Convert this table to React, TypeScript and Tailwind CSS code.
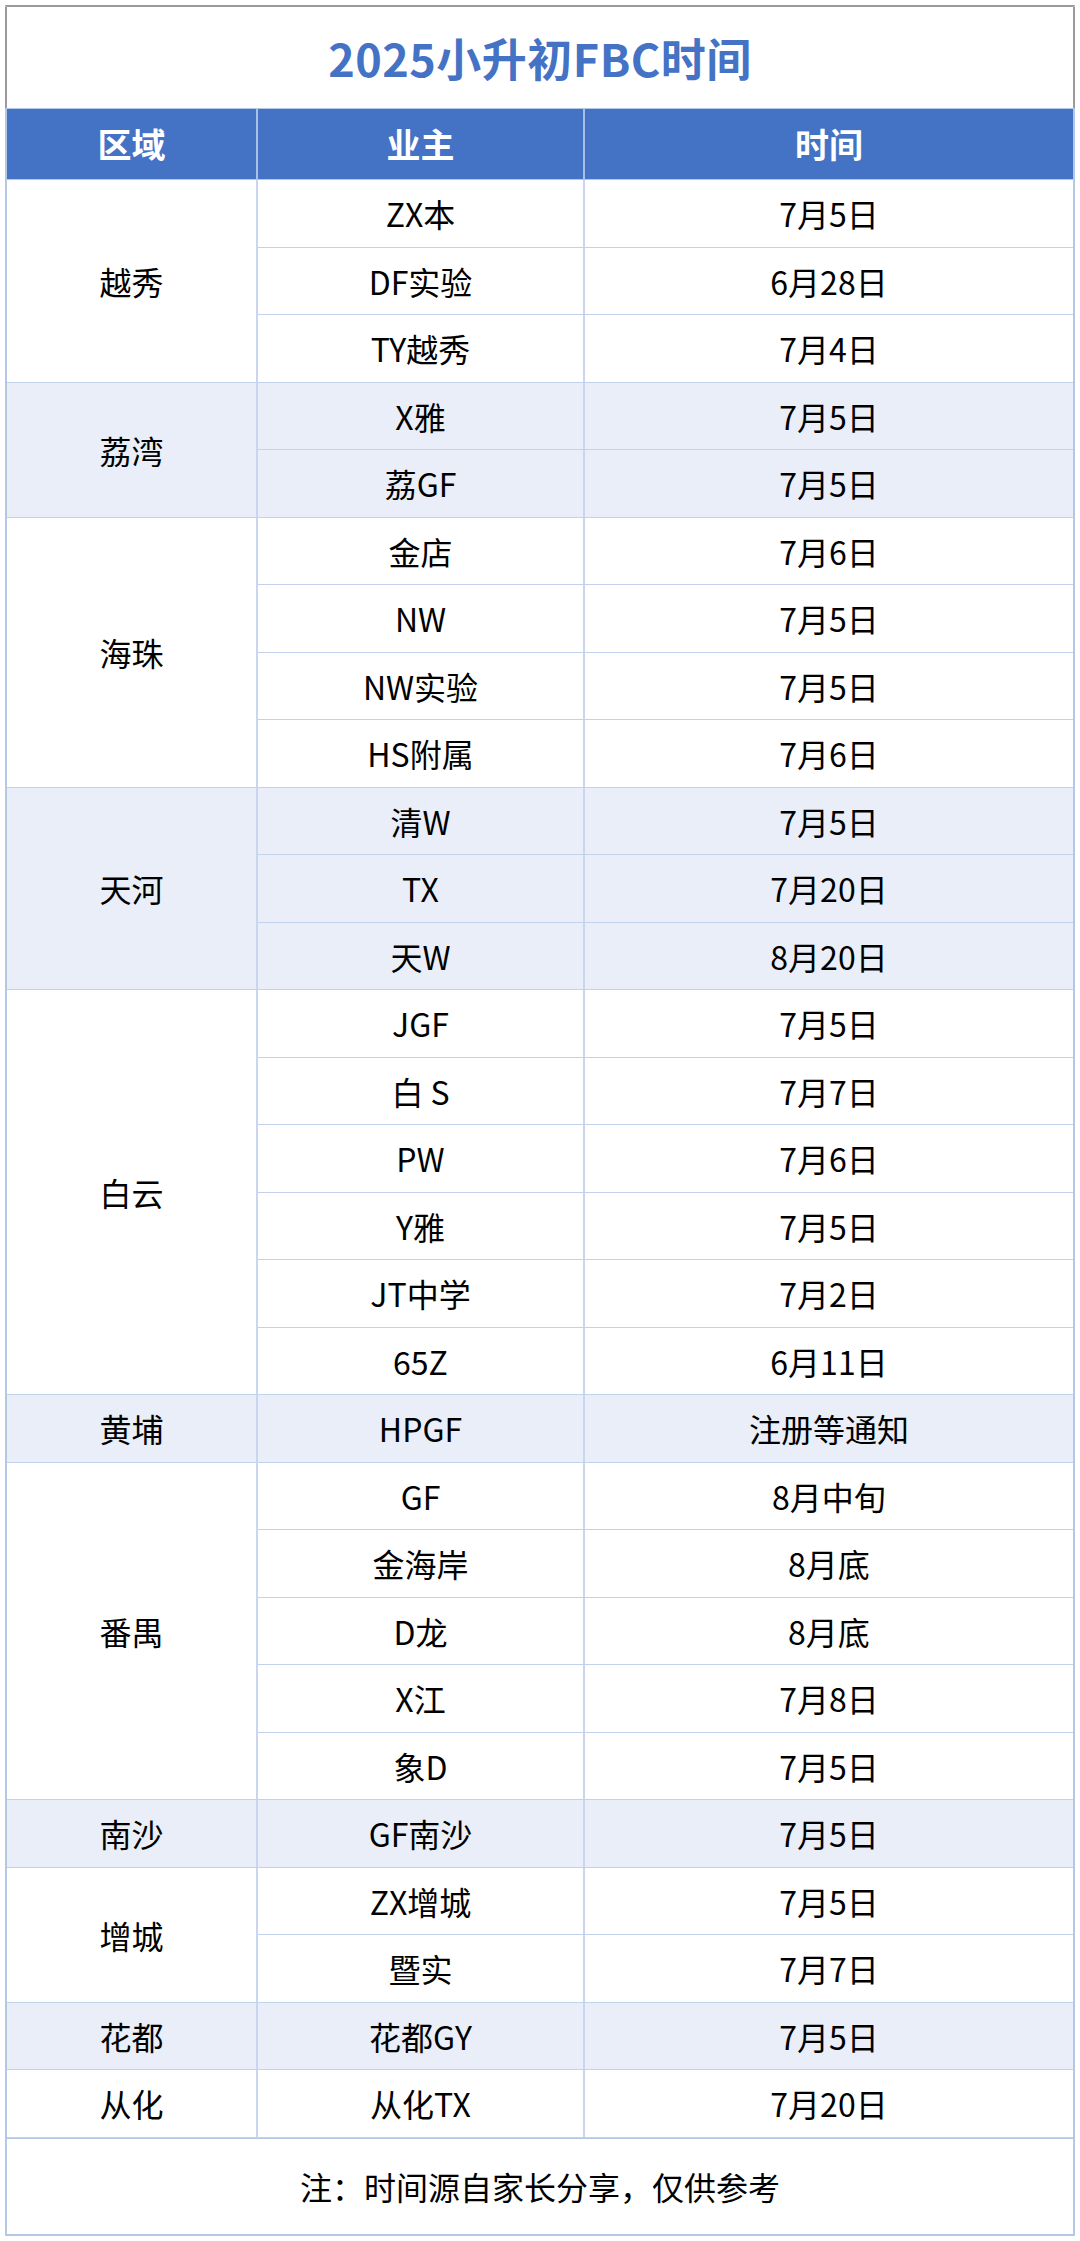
const groups = [
  { region: "越秀", rows: [["ZX本", "7月5日"], ["DF实验", "6月28日"], ["TY越秀", "7月4日"]] },
  { region: "荔湾", rows: [["X雅", "7月5日"], ["荔GF", "7月5日"]] },
  { region: "海珠", rows: [["金店", "7月6日"], ["NW", "7月5日"], ["NW实验", "7月5日"], ["HS附属", "7月6日"]] },
  { region: "天河", rows: [["清W", "7月5日"], ["TX", "7月20日"], ["天W", "8月20日"]] },
  {
    region: "白云",
    rows: [["JGF", "7月5日"], ["白 S", "7月7日"], ["PW", "7月6日"], ["Y雅", "7月5日"], ["JT中学", "7月2日"], ["65Z", "6月11日"]],
  },
  { region: "黄埔", rows: [["HPGF", "注册等通知"]] },
  {
    region: "番禺",
    rows: [["GF", "8月中旬"], ["金海岸", "8月底"], ["D龙", "8月底"], ["X江", "7月8日"], ["象D", "7月5日"]],
  },
  { region: "南沙", rows: [["GF南沙", "7月5日"]] },
  { region: "增城", rows: [["ZX增城", "7月5日"], ["暨实", "7月7日"]] },
  { region: "花都", rows: [["花都GY", "7月5日"]] },
  { region: "从化", rows: [["从化TX", "7月20日"]] },
];

export default function App() {
  return (
    <div
      className="w-[1080px] h-[2241px] bg-white p-[5px] text-black"
      style={{ fontFamily: '"Noto Sans CJK SC", "Noto Sans", sans-serif' }}
    >
      <div className="flex flex-col border-2 border-t-[#9a9a9a] border-x-[#b4c7e7] border-b-[#b4c7e7]">
        <div className="h-[101px] flex items-center justify-center border-x-2 border-[#9a9a9a] -mx-[2px] -mt-[0px]">
          <h1 className="text-[45px] font-bold leading-none text-[#4472c4] tracking-[0.5px]">2025小升初FBC时间</h1>
        </div>
        <div className="h-[72px] flex bg-[#4472c4] text-white text-[34px] font-bold leading-none border-y border-[#b4c7e7]">
          <div className="w-[251px] flex items-center justify-center border-r-2 border-[#a9bfe6]">区域</div>
          <div className="w-[327px] flex items-center justify-center border-r-2 border-[#a9bfe6]">业主</div>
          <div className="flex-1 flex items-center justify-center">时间</div>
        </div>
        {groups.map((g, gi) => (
          <div key={gi} className={"flex text-[32px] leading-none " + (gi % 2 === 1 ? "bg-[#e9eef8]" : "bg-white")}>
            <div className="w-[251px] flex items-center justify-center border-r-2 border-[#c9d6ee] border-b border-b-[#c3d2ec]">
              {g.region}
            </div>
            <div className="flex-1 flex flex-col">
              {g.rows.map((r, ri) => (
                <div key={ri} className="h-[67.5px] flex border-b border-[#c3d2ec]">
                  <div className="w-[327px] flex items-center justify-center border-r-2 border-[#c9d6ee]">{r[0]}</div>
                  <div className="flex-1 flex items-center justify-center">{r[1]}</div>
                </div>
              ))}
            </div>
          </div>
        ))}
        <div className="h-[96px] flex items-center justify-center text-[32px] leading-none border-t border-[#b4c7e7]">
          注：时间源自家长分享，仅供参考
        </div>
      </div>
    </div>
  );
}
